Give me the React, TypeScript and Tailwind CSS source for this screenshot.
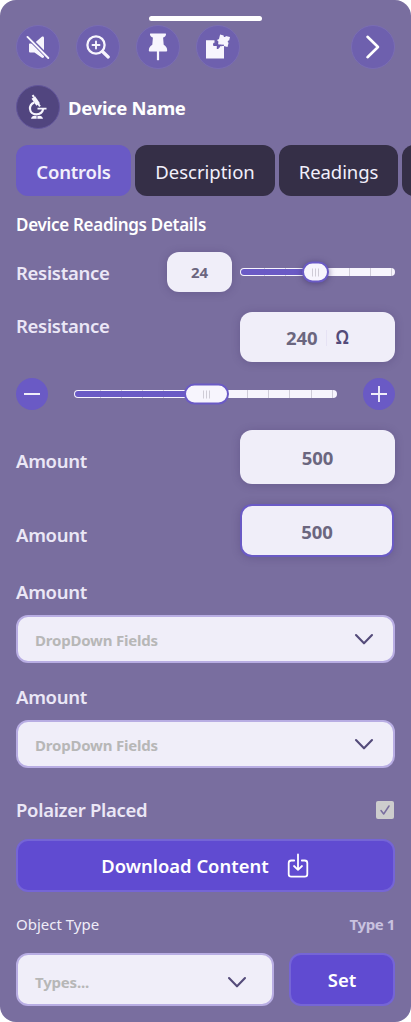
import type { ReactNode } from "react";

function RoundButton({ label, children }: { label: string; children: ReactNode }) {
  return (
    <button
      aria-label={label}
      className="flex size-11 items-center justify-center rounded-full border border-[#7a6db4] bg-[#6e60ae] text-[#f7f5fd]"
    >
      {children}
    </button>
  );
}

function MuteIcon() {
  return (
    <svg width="24" height="24" viewBox="0 0 24 24">
      <path d="M4 8.500h4L15.500 2c1.400-1 2.500-.4 2.500 1v18.500c0 1.400-1.200 1.800-2.400 1L8.500 17.500H4.500c-1 0-1.500-.5-1.500-1.300V9.500c0-.7.3-1 1-1z" fill="currentColor" />
      <path d="M2 2L22.500 22.700" stroke="#6e60ae" strokeWidth="4.200" />
      <path d="M1.500 1.900L22.300 23" stroke="currentColor" strokeWidth="1.900" strokeLinecap="round" />
    </svg>
  );
}

function ZoomIcon() {
  return (
    <svg width="24" height="24" viewBox="0 0 24 24" fill="none" stroke="currentColor" strokeLinecap="round">
      <circle cx="10" cy="10" r="8.600" strokeWidth="2.300" />
      <path d="M10 6.500v7M6.500 10h7" strokeWidth="1.900" />
      <path d="M16.500 16.500l5.700 5.500" strokeWidth="3.200" />
    </svg>
  );
}

function PinIcon() {
  return (
    <svg width="20" height="28" viewBox="0 0 20 28" fill="currentColor">
      <path d="M2.500 0.500h15c.8 0 .6 1.300.2 1.900-.5.900-1.300 1.600-2.600 2l.6 7.300c2 .9 3.500 2.900 3.500 5.800 0 .6-.3 1-.9 1H1.700c-.6 0-.9-.4-.9-1 0-2.900 1.500-4.900 3.500-5.800l.6-7.300c-1.300-.4-2.100-1.100-2.600-2-.4-.6-.6-1.900.2-1.900z" />
      <path d="M8.900 18h2.200v8.300L10 27.700l-1.100-1.400z" />
    </svg>
  );
}

function PuzzleIcon() {
  return (
    <svg width="26" height="26" viewBox="0 0 26 26">
      <path d="M1 6.300h8.500v2.500c-1.400-.6-2.400 2.700 0 2.300v.900h3.200c-.7 2.600 2.900 2.600 2.300 0h4v12.600H1z" fill="currentColor" />
      <g transform="rotate(14 18.700 6.800)">
        <path
          d="M13.700 1.600h3.700c-.4 1.700 2.500 1.700 2.100 0h4.400v3.600c-1.500-.3-1.500 2.500 0 2.200v4.500h-3.800c.4-1.900-2.400-1.900-2 0h-4.400V8.500c-1.800.5-1.800-2.400 0-2z"
          fill="currentColor"
        />
      </g>
      <path d="M8.300 10.300h3.200V7.900h1.700v2.600h3.600v1.700h-3.200v2.900h-1.800v-3H8.300z" fill="#6959ae" />
    </svg>
  );
}

function MicroscopeIcon() {
  return (
    <svg width="20" height="26" viewBox="0 0 20 26" fill="none" stroke="#f7f5fd">
      <path d="M5.300 3.400l4.900 7" strokeWidth="4.300" />
      <path d="M4.500 1.200L6 3M10.300 10l1.700 2.300" strokeWidth="2" />
      <path d="M6.200 8.500C2.900 10 1.800 12.500 2 15c.3 3.200 3 5.300 6.200 5.300 3.600 0 6.300-2 7.100-5.600" strokeWidth="2.200" />
      <path d="M9.500 14.600H18.500" strokeWidth="1.800" />
      <path d="M3 24.800c.5-2.900 3.200-3.800 6-2.600 2.800-1.200 5.500-.3 6 2.600z" fill="#f7f5fd" stroke="none" />
      <path d="M9 22v3" stroke="#7d72aa" strokeWidth="1" />
    </svg>
  );
}

function ChevronDown() {
  return (
    <svg width="20" height="12" viewBox="0 0 20 12" fill="none" stroke="#544b7a" strokeWidth="2.100" strokeLinecap="round" strokeLinejoin="round">
      <path d="M2 2.100l8 8.200 8-8.200" />
    </svg>
  );
}

function DownloadIcon() {
  return (
    <svg width="22" height="26" viewBox="0 0 22 26" fill="none" stroke="white" strokeWidth="1.800" strokeLinecap="round" strokeLinejoin="round">
      <path d="M7.200 7.500H4.300c-1.700 0-2.600.9-2.600 2.500v11.300c0 1.500.9 2.400 2.600 2.400h13.400c1.700 0 2.600-.9 2.600-2.400V10c0-1.600-.9-2.500-2.600-2.500h-2.900" />
      <path d="M11 1.500v15M7 13l4 3.800 4-3.800" />
    </svg>
  );
}

function Tab({ className, children }: { className: string; children?: ReactNode }) {
  return (
    <button className={`h-[51px] shrink-0 rounded-xl text-[18.5px] text-[#f2effb] ${className}`}>
      {children}
    </button>
  );
}

function Slider({
  trackClass,
  fillClass,
  thumbClass,
  ticks,
}: {
  trackClass: string;
  fillClass: string;
  thumbClass: string;
  ticks: number[];
}) {
  return (
    <div className={`relative h-2 rounded-full bg-[#f7f5fd] ${trackClass}`}>
      {ticks.map((x) => (
        <div key={x} className="absolute top-0 h-2 w-px bg-[#cfccd8]" style={{ left: x }} />
      ))}
      <div className={`absolute top-px left-px h-1.5 rounded-full bg-[#6a5ac5] ${fillClass}`} />
      <div
        className={`absolute top-1/2 flex h-[21px] -translate-y-1/2 items-center justify-center gap-[2px] rounded-full border-2 border-[#6a5ac5] bg-[#f7f5fd] ${thumbClass}`}
      >
        <i className="h-2 w-px bg-[#cfccd6]" />
        <i className="h-2 w-px bg-[#cfccd6]" />
        <i className="h-2 w-px bg-[#cfccd6]" />
      </div>
    </div>
  );
}

function Label({ className = "", children }: { className?: string; children: ReactNode }) {
  return <span className={`text-[18.5px] leading-6 font-semibold tracking-[-0.3px] text-[#ebe7f6] ${className}`}>{children}</span>;
}

function Select({ className, children }: { className: string; children: ReactNode }) {
  return (
    <div className={`flex items-center justify-between rounded-xl border-2 border-[#b8ade3] bg-[#f0eef9] pl-[17px] text-[15px] font-bold tracking-[-0.2px] text-[#b7b7b7] ${className}`}>
      <span className="pt-0.5">{children}</span>
      <ChevronDown />
    </div>
  );
}

const fieldClass =
  "flex items-center justify-center bg-[#f0eef9] font-bold text-[#6b667f] shadow-[0_1px_8px_rgba(60,45,100,0.28)]";

export default function App() {
  return (
    <main className="relative flex h-[1022px] w-[411px] flex-col overflow-hidden rounded-2xl bg-[#796e9f] px-4 pt-[25px] font-['Noto_Sans',sans-serif]">
      <div className="absolute top-4 left-[149px] h-[5px] w-[113px] rounded-full bg-white" />

      <header className="flex h-11 gap-4">
        <RoundButton label="Mute"><MuteIcon /></RoundButton>
        <RoundButton label="Zoom in"><ZoomIcon /></RoundButton>
        <RoundButton label="Pin"><PinIcon /></RoundButton>
        <RoundButton label="Extensions"><PuzzleIcon /></RoundButton>
        <div className="ml-auto">
          <RoundButton label="Next">
            <svg width="16" height="26" viewBox="0 0 16 26" fill="none" stroke="white" strokeWidth="2.600" strokeLinecap="round" strokeLinejoin="round">
              <path d="M2.500 2.800L13 13 2.500 23.200" />
            </svg>
          </RoundButton>
        </div>
      </header>

      <section className="mt-4 flex h-11 items-center gap-2">
        <div className="flex size-11 items-center justify-center rounded-full border border-[#62559a] bg-[#51457f]">
          <MicroscopeIcon />
        </div>
        <h1 className="pt-0.5 text-[18.5px] font-bold tracking-[-0.3px] text-white">Device Name</h1>
      </section>

      <nav className="mt-4 -mr-4 flex h-[51px] gap-1 overflow-hidden">
        <Tab className="w-[115px] bg-[#6a5ac5] pt-0.5 font-semibold tracking-[-0.2px]">Controls</Tab>
        <Tab className="w-[140px] bg-[#352f47] pt-0.5">Description</Tab>
        <Tab className="w-[119px] bg-[#352f47] pt-0.5 tracking-[-0.1px]">Readings</Tab>
        <Tab className="w-[119px] bg-[#352f47]" />
      </nav>

      <h2 className="mt-4 h-6 text-[17px] leading-[25px] font-semibold tracking-[-0.3px] text-white">Device Readings Details</h2>

      <div className="mt-4 flex h-10 items-center">
        <Label className="mt-0.5">Resistance</Label>
        <div className={`${fieldClass} ml-auto h-10 w-[65px] rounded-xl pt-px text-[15px]`}>24</div>
        <div className="ml-2">
          <Slider trackClass="w-[155px]" fillClass="w-[74px]" thumbClass="left-[62px] w-[27px] shadow-[0_1px_6px_rgba(60,45,100,0.6)]" ticks={[24, 45, 109, 130, 151]} />
        </div>
      </div>

      <div className="mt-5 flex h-[50px] justify-between">
        <Label className="mt-0.5">Resistance</Label>
        <div className={`${fieldClass} h-[50px] w-[155px] rounded-xl pt-px text-[18.5px]`}>
          <span>240</span>
          <span className="mx-2 h-4 w-px bg-[#e6e2f4]" />
          <span className="-mt-px inline-block scale-x-90 text-[19.5px] font-semibold text-[#544b7a]">Ω</span>
        </div>
      </div>

      <div className="mt-4 flex h-8 items-center justify-between">
        <button aria-label="Decrease" className="flex size-8 items-center justify-center rounded-full bg-[#6a5ac5]">
          <i className="h-0.5 w-4 bg-[#f0eef9]" />
        </button>
        <Slider trackClass="-ml-px w-[263px]" fillClass="w-[120px]" thumbClass="left-[110px] w-[45px]" ticks={[26, 47, 68, 89, 173, 194, 215, 237, 258]} />
        <button aria-label="Increase" className="flex size-8 items-center justify-center rounded-full bg-[#6a5ac5]">
          <svg width="16" height="16" viewBox="0 0 16 16" stroke="#f0eef9" strokeWidth="1.900">
            <path d="M8 0v16M0 8h16" />
          </svg>
        </button>
      </div>

      <div className="mt-5 flex h-[54px] items-center justify-between">
        <Label className="mt-2">Amount</Label>
        <div className={`${fieldClass} h-[54px] w-[155px] rounded-xl pt-px text-[18.5px]`}>500</div>
      </div>

      <div className="mt-5 flex h-[53px] items-center justify-between">
        <Label className="mt-2">Amount</Label>
        <div className={`${fieldClass} mr-px h-[53px] w-[154px] rounded-xl border-2 border-[#6a5ac5] pt-0.5 text-[18.5px]`}>500</div>
      </div>

      <Label className="mt-[23px]">Amount</Label>
      <Select className="mt-[11px] h-12 pr-[19px]">DropDown Fields</Select>

      <Label className="mt-[22px]">Amount</Label>
      <Select className="mt-[11px] h-12 pr-[19px]">DropDown Fields</Select>

      <div className="mt-[30px] flex h-6 items-center justify-between">
        <Label>Polaizer Placed</Label>
        <div className="mr-px -mt-px flex size-[18px] items-center justify-center rounded-[2px] bg-[#cdcdcd]">
          <svg width="12" height="12" viewBox="0 0 12 12" fill="none" stroke="#796e9f" strokeWidth="1.500" strokeLinecap="round" strokeLinejoin="round">
            <path d="M2 6.500L4.700 10 10 2" />
          </svg>
        </div>
      </div>

      <button className="mt-[17px] flex h-[53px] items-center justify-center gap-[18px] rounded-xl border-2 border-[#7565d6] bg-[#604bd1] text-[18.4px] font-semibold text-white">
        <span className="-ml-px pt-px">Download Content</span>
        <DownloadIcon />
      </button>

      <div className="mt-5 flex h-6 items-center justify-between text-[15px]">
        <span className="text-[#efecf8]">Object Type</span>
        <span className="font-bold tracking-[-0.4px] text-[#c9c2df]">Type 1</span>
      </div>

      <div className="mt-[17px] flex h-[53px] justify-between">
        <Select className="w-[258px] pt-1 pr-[25px]">Types...</Select>
        <button className="w-[106px] rounded-xl border-2 border-[#7565d6] bg-[#604bd1] pt-px text-[18.5px] font-semibold text-white">
          Set
        </button>
      </div>
    </main>
  );
}
